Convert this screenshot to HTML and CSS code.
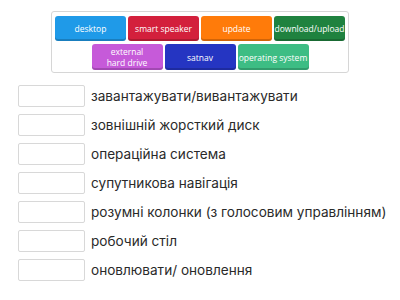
FILE: index.html
```html
<!DOCTYPE html>
<html>
<head>
    <title>Match up</title>
    <link rel="stylesheet" href="styles.css">
</head>
<body>
    <div class="pool">
        <div class="tile blue">desktop</div>
        <div class="tile red">smart speaker</div>
        <div class="tile orange">update</div>
        <div class="tile green">download/upload</div>
        <div class="tile purple">external<br>hard drive</div>
        <div class="tile navy">satnav</div>
        <div class="tile teal">operating system</div>
    </div>

    <div class="list">
        <div class="row"><div class="slot"></div><span>завантажувати/вивантажувати</span></div>
        <div class="row"><div class="slot"></div><span>зовнішній жорсткий диск</span></div>
        <div class="row"><div class="slot"></div><span>операційна система</span></div>
        <div class="row"><div class="slot"></div><span>супутникова навігація</span></div>
        <div class="row"><div class="slot"></div><span>розумні колонки (з голосовим управлінням)</span></div>
        <div class="row"><div class="slot"></div><span>робочий стіл</span></div>
        <div class="row"><div class="slot"></div><span>оновлювати/ оновлення</span></div>
    </div>
</body>
</html>
```

FILE: styles.css
```css
body {
    margin: 0;
    background-color: #fff;
    font-family: Inter, "Noto Sans", sans-serif;
}
.pool {
    width: 290px;
    margin: 11px 0 0 51px;
    padding: 4px 3px 2px;
    border: 1px solid #d6d6d6;
    border-radius: 3px;
    display: flex;
    flex-wrap: wrap;
    justify-content: center;
    gap: 3px 2px;
}
.tile {
    width: 71px;
    min-height: 25px;
    box-sizing: border-box;
    padding: 2px 2px;
    border-radius: 3px;
    color: #fff;
    font-family: "Open Sans", sans-serif;
    font-size: 8.5px;
    line-height: 11px;
    display: flex;
    align-items: center;
    justify-content: center;
    text-align: center;
    white-space: nowrap;
    box-shadow: inset 0 -2px 0 rgba(0, 0, 0, 0.18);
}
.blue { background-color: #1f9ae8; }
.red { background-color: #d3203c; }
.orange { background-color: #ff7b0a; }
.green { background-color: #1f823f; }
.purple { background-color: #c65ad9; }
.navy { background-color: #2535c2; }
.teal { background-color: #3dbd84; }
.list {
    margin: 8px 0 0 18px;
}
.row {
    height: 29px;
    display: flex;
    align-items: center;
}
.slot {
    width: 67px;
    height: 22px;
    box-sizing: border-box;
    border: 1px solid #d8d8d8;
    border-radius: 2px;
    background-color: #fff;
    margin-right: 6px;
}
.row span {
    font-size: 13.6px;
    color: #2a2a2a;
}
```
